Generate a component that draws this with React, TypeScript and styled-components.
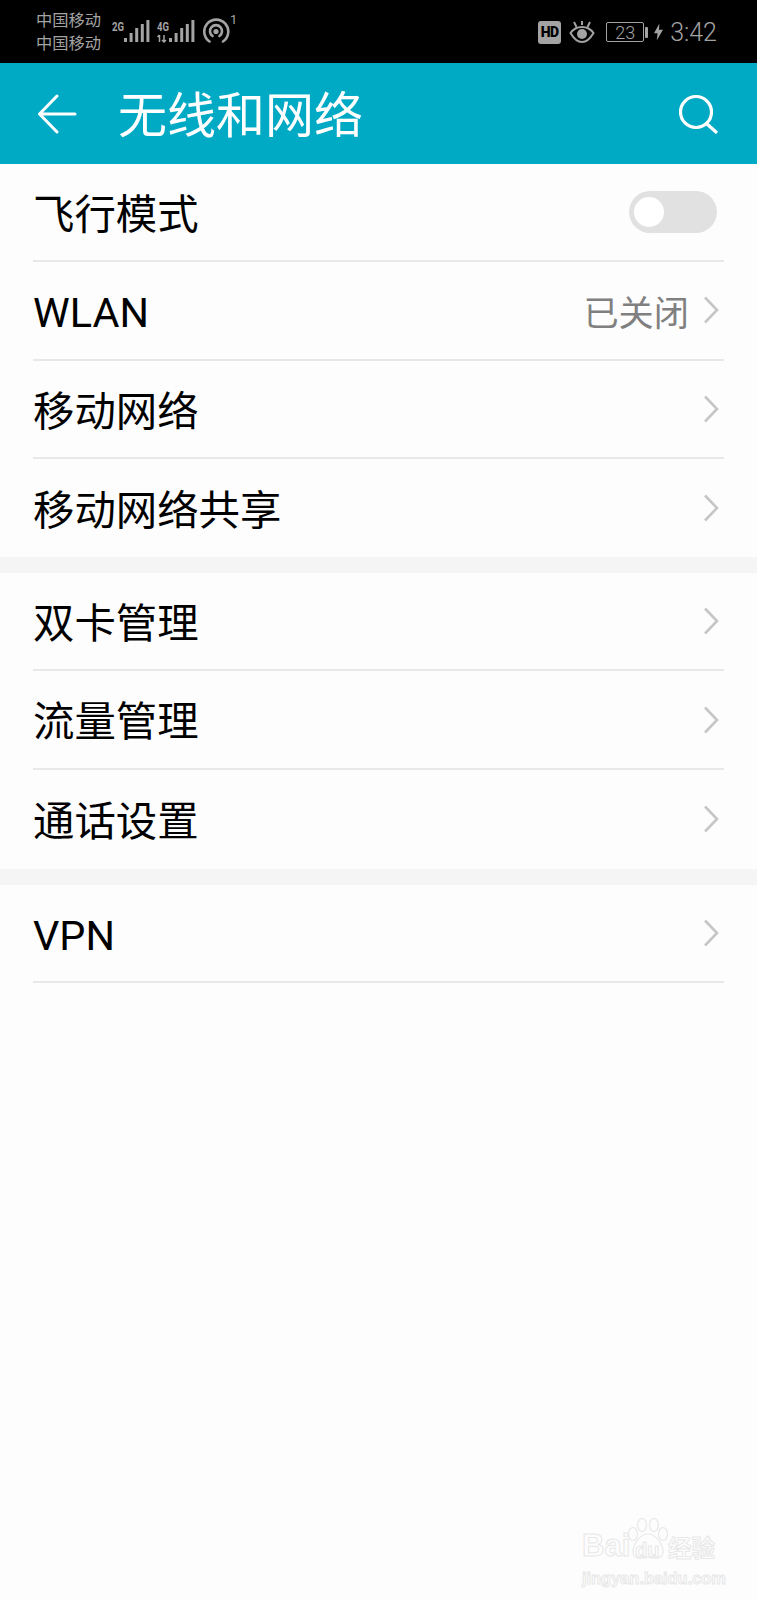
import styled, { createGlobalStyle } from "styled-components";

const GlobalStyle = createGlobalStyle`
  html, body {
    margin: 0;
    padding: 0;
    background: #fdfdfd;
    font-family: Roboto, "Noto Sans CJK SC", sans-serif;
  }
`;

const Screen = styled.div`
  position: relative;
  width: 757px;
  height: 1600px;
  overflow: hidden;
  background: #fdfdfd;
`;

const StatusBar = styled.div`
  height: 63px;
  box-sizing: border-box;
  padding: 1px 40px 0 36px;
  background: #000;
  color: #a3a3a3;
  display: flex;
  align-items: center;
  justify-content: space-between;
`;

const StatusGroup = styled.div`
  display: flex;
  align-items: center;
`;

const Carriers = styled.div`
  font-size: 16.3px;
  line-height: 23px;
  font-weight: 400;
  margin-right: 11px;
`;

const SignalIcon = styled.svg`
  display: block;
  margin: -3px 7px 0 0;
`;

const HotspotIcon = styled.svg`
  display: block;
  margin: -8px 0 0 1px;
`;

const HdBadge = styled.span`
  width: 23px;
  height: 23px;
  border-radius: 3px;
  background: #a3a3a3;
  color: #000;
  font-size: 14px;
  font-weight: 900;
  letter-spacing: -0.5px;
  display: flex;
  align-items: center;
  justify-content: center;
  margin-right: 8px;
`;

const Battery = styled.span`
  width: 36px;
  height: 18px;
  border: 1px solid #a3a3a3;
  border-radius: 2px;
  font-size: 18px;
  font-weight: 300;
  display: flex;
  align-items: center;
  justify-content: center;
  margin-left: 11px;
`;

const BatteryNub = styled.span`
  width: 3px;
  height: 11px;
  margin-left: 1px;
  border-radius: 1px;
  background: #a3a3a3;
`;

const Bolt = styled.svg`
  display: block;
  margin-left: 6px;
`;

const Clock = styled.span`
  font-size: 25px;
  font-weight: 300;
  margin-left: 7px;
`;

const AppBar = styled.header`
  height: 101px;
  background: #00a9c4;
  color: #fff;
  display: flex;
  align-items: center;
  padding: 0 39px 0 37px;
`;

const Title = styled.h1`
  flex: 1;
  margin: 6px 0 0 41px;
  font-size: 49px;
  font-weight: 400;
  line-height: 1;
`;

const Section = styled.section<{ $trail?: number }>`
  background: #fdfdfd;
  padding-bottom: ${(p) => p.$trail ?? 0}px;
`;

const SectionGap = styled.div`
  height: 16px;
  background: #f5f5f5;
`;

const Row = styled.div<{ $last?: boolean }>`
  height: 98.3px;
  box-sizing: border-box;
  margin: 0 33px;
  display: flex;
  align-items: center;
  justify-content: space-between;
  border-bottom: ${(p) => (p.$last ? "none" : "2px solid #e8e8e8")};
`;

const Label = styled.span`
  margin-top: 7px;
  font-size: 41.4px;
  color: #000;
  line-height: 1;
`;

const Trailing = styled.div`
  display: flex;
  align-items: center;
`;

const Value = styled.span`
  font-size: 35.2px;
  font-weight: 400;
  color: #808080;
  margin-right: 14px;
`;

const Chevron = styled.svg`
  display: block;
  margin-right: 5px;
`;

const Switch = styled.div`
  width: 88px;
  height: 42px;
  box-sizing: border-box;
  margin-right: 7px;
  padding: 4px;
  border-radius: 21px;
  background: #e1e1e1;
`;

const Knob = styled.div`
  width: 30px;
  height: 30px;
  margin: 2px 0 0 1px;
  border-radius: 50%;
  background: #fff;
`;

const Watermark = styled.div`
  position: absolute;
  left: 582px;
  top: 1518px;
  width: 136px;
  height: 66px;
  color: #fdfdfd;
  -webkit-text-stroke: 1px #e8e8e8;
`;

const MarkLine = styled.div`
  display: flex;
  align-items: flex-end;
  height: 43px;
`;

const MarkBai = styled.span`
  width: 86px;
  font-size: 31px;
  font-weight: 700;
  line-height: 1;
  font-family: "Liberation Sans", sans-serif;
`;

const MarkCjk = styled.span`
  font-size: 23.5px;
  font-weight: 700;
  line-height: 1;
`;

const MarkPaw = styled.svg`
  position: absolute;
  left: 46px;
  top: 0;
`;

const MarkDu = styled.span`
  position: absolute;
  left: 53px;
  top: 22px;
  font-size: 20px;
  font-weight: 700;
  line-height: 1;
  font-family: "Liberation Sans", sans-serif;
`;

const MarkUrl = styled.div`
  margin-top: 9px;
  font-size: 16.4px;
  line-height: 16px;
  font-weight: 700;
  white-space: nowrap;
  font-family: "Liberation Sans", sans-serif;
`;

function RowChevron() {
  return (
    <Chevron width="16" height="28" viewBox="0 0 16 28" fill="none" stroke="#c6c6c6" strokeWidth="2.6">
      <path d="M2 1.5 14 14 2 26.5" />
    </Chevron>
  );
}

// Network type above a dot and four rising bars; data arrows only on the 4G card
function SignalBars({ label, arrows }: { label: string; arrows?: boolean }) {
  const heights = [4, 9, 14, 18, 22];
  return (
    <SignalIcon width="38" height="25" viewBox="0 0 38 25">
      <text x="0" y="13" fontSize="13" fontWeight="700" fill="#a3a3a3" fontFamily="Roboto" textLength="12" lengthAdjust="spacingAndGlyphs">
        {label}
      </text>
      {arrows && <path d="M2.500 24v-7M0.500 19l2-2M7 17v7M5 22l2 2 2-2" stroke="#a3a3a3" strokeWidth="1.500" fill="none" />}
      {heights.map((h, i) => (
        <rect key={i} x={12 + i * 5.6} y={24 - h} width="3" height={h} fill="#a3a3a3" />
      ))}
    </SignalIcon>
  );
}

const rowsA = ["WLAN", "移动网络", "移动网络共享"];
const rowsB = ["双卡管理", "流量管理", "通话设置"];

export default function App() {
  return (
    <Screen>
      <GlobalStyle />
      <StatusBar>
        <StatusGroup>
          <Carriers>
            中国移动
            <br />
            中国移动
          </Carriers>
          <SignalBars label="2G" />
          <SignalBars label="4G" arrows />
          <HotspotIcon width="33" height="30" viewBox="0 0 33 30" fill="none" stroke="#a3a3a3" strokeWidth="2.6" strokeLinecap="round">
            <path d="M6.500 28.500A12 12 0 1 1 20 28.500" />
            <path d="M9.500 23A6 6 0 1 1 16.500 23" />
            <circle cx="13" cy="18.500" r="1.300" />
            <text x="27" y="11" fontSize="13" stroke="none" fill="#a3a3a3" fontFamily="Roboto">
              1
            </text>
          </HotspotIcon>
        </StatusGroup>
        <StatusGroup>
          <HdBadge>HD</HdBadge>
          <svg width="26" height="24" viewBox="0 0 26 24" fill="none" stroke="#a3a3a3" strokeWidth="2">
            <path d="M1.500 13C5 8 8.500 7 13 7s8 1 11.500 6c-3.500 6-7 9-11.500 9s-8-3-11.500-9Z" />
            <circle cx="13" cy="14" r="5" fill="#a3a3a3" stroke="none" />
            <path d="M13 1v4M5 2l2.500 5M21 2l-2.500 5" />
          </svg>
          <Battery>23</Battery>
          <BatteryNub />
          <Bolt width="9" height="18" viewBox="0 0 10 19">
            <path d="M6 0 0 11h4l-1 8 7-12H5.500Z" fill="#a3a3a3" />
          </Bolt>
          <Clock>3:42</Clock>
        </StatusGroup>
      </StatusBar>
      <AppBar>
        <svg width="40" height="40" viewBox="0 0 40 40" fill="none" stroke="#fff" strokeWidth="3" strokeLinecap="round" strokeLinejoin="round">
          <path d="M38 20H3M20 2 2.500 20 20 38" />
        </svg>
        <Title>无线和网络</Title>
        <svg width="40" height="40" viewBox="0 0 40 40" fill="none" stroke="#fff" strokeWidth="3.2" strokeLinecap="round">
          <circle cx="18" cy="18" r="15.500" />
          <path d="M29 30 38 38" />
        </svg>
      </AppBar>
      <Section>
        <Row>
          <Label>飞行模式</Label>
          <Switch>
            <Knob />
          </Switch>
        </Row>
        {rowsA.map((name, i) => (
          <Row key={name} $last={i === rowsA.length - 1}>
            <Label>{name}</Label>
            <Trailing>
              {name === "WLAN" && <Value>已关闭</Value>}
              <RowChevron />
            </Trailing>
          </Row>
        ))}
      </Section>
      <SectionGap />
      <Section $trail={1}>
        {rowsB.map((name, i) => (
          <Row key={name} $last={i === rowsB.length - 1}>
            <Label>{name}</Label>
            <RowChevron />
          </Row>
        ))}
      </Section>
      <SectionGap />
      <Section>
        <Row>
          <Label>VPN</Label>
          <RowChevron />
        </Row>
      </Section>
      <Watermark>
        <MarkPaw width="40" height="42" viewBox="0 0 40 42" fill="#fdfdfd" stroke="#e8e8e8" strokeWidth="1.200">
          <ellipse cx="5" cy="16" rx="4.500" ry="6.500" />
          <ellipse cx="14" cy="7" rx="4.500" ry="6.500" />
          <ellipse cx="26" cy="7" rx="4.500" ry="6.500" />
          <ellipse cx="35" cy="16" rx="4.500" ry="6.500" />
          <path d="M20 16c7 0 15 9 15 18 0 7-8 7-15 5-7 2-15 2-15-5 0-9 8-18 15-18Z" />
        </MarkPaw>
        <MarkDu>du</MarkDu>
        <MarkLine>
          <MarkBai>Bai</MarkBai>
          <MarkCjk>经验</MarkCjk>
        </MarkLine>
        <MarkUrl>jingyan.baidu.com</MarkUrl>
      </Watermark>
    </Screen>
  );
}
